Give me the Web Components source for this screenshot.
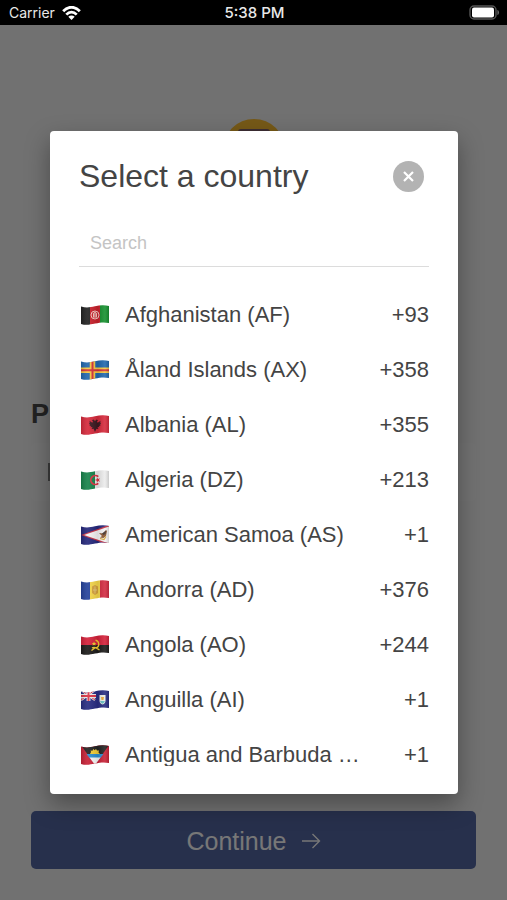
<!DOCTYPE html>
<html lang="en">
<head>
<meta charset="utf-8">
<meta name="viewport" content="width=device-width, initial-scale=1">
<title>Select a country</title>
<style>
  html, body {
    height: 100%;
    margin: 0;
  }
  body {
    font-family: "Liberation Sans", Arial, sans-serif;
    color: #444;
    overflow: hidden;
  }
</style>
</head>
<body>
<app-shell>
  <status-bar slot="status" carrier="Carrier" time="5:38 PM"></status-bar>
  <phone-screen label="P" action="Continue"></phone-screen>
  <picker-dialog slot="dialog" heading="Select a country">
    <country-row code="AF" name="Afghanistan" dial="+93"></country-row>
    <country-row code="AX" name="Åland Islands" dial="+358"></country-row>
    <country-row code="AL" name="Albania" dial="+355"></country-row>
    <country-row code="DZ" name="Algeria" dial="+213"></country-row>
    <country-row code="AS" name="American Samoa" dial="+1"></country-row>
    <country-row code="AD" name="Andorra" dial="+376"></country-row>
    <country-row code="AO" name="Angola" dial="+244"></country-row>
    <country-row code="AI" name="Anguilla" dial="+1"></country-row>
    <country-row code="AG" name="Antigua and Barbuda" dial="+1"></country-row>
  </picker-dialog>
</app-shell>

<script>
// Attach an open root and fill it
function render(el, html) {
  el.attachShadow({ mode: "open" }).innerHTML = html;
}

class AppShell extends HTMLElement {
  constructor() {
    super();
    render(this, `
<style>
  :host {
    display: flex;
    flex-direction: column;
    height: 100vh;
  }
  main {
    flex: 1;
    min-height: 0;
    display: grid;
  }
  .screen, .overlay {
    grid-area: 1 / 1;
    min-width: 0;
    min-height: 0;
    display: grid;
  }
  .overlay {
    z-index: 1;
    box-sizing: border-box;
    padding: 106px 49px 106px 50px;
    background: rgba(0, 0, 0, 0.5);
  }
</style>
<slot name="status"></slot>
<main>
  <div class="screen"><slot></slot></div>
  <div class="overlay"><slot name="dialog"></slot></div>
</main>`);
  }
}
customElements.define("app-shell", AppShell);

class StatusBar extends HTMLElement {
  constructor() {
    super();
    render(this, `
<style>
  :host {
    display: grid;
    grid-template-columns: 1fr auto 1fr;
    align-items: center;
    height: 25px;
    padding: 0 7px 0 9px;
    background: #000;
    color: #e8e8e8;
    font: 14px/25px Inter, sans-serif;
  }
  .left {
    display: flex;
    align-items: center;
    gap: 7px;
  }
  .time {
    font-size: 15px;
    font-weight: 500;
  }
  .battery {
    justify-self: end;
  }
  svg {
    display: block;
  }
</style>
<div class="left">
  <span class="carrier"></span>
  <svg width="19" height="14" viewBox="0 0 19 14" fill="none" stroke="#fff" stroke-width="2.8" aria-hidden="true">
    <path d="M1.2 5.2C6-.1 13-.1 17.8 5.2"/>
    <path d="M4.3 8.600c3.1-3.2 7.3-3.2 10.4 0"/>
    <path d="M9.500 14 6.300 10.800c1.800-1.700 4.600-1.700 6.400 0z" fill="#fff" stroke="none"/>
  </svg>
</div>
<span class="time"></span>
<svg class="battery" width="31" height="15" viewBox="0 0 31 15" aria-hidden="true">
  <rect x="1" y="1" width="26" height="13" rx="4" fill="none" stroke="#555" stroke-width="1.4"/>
  <rect x="3" y="2.500" width="22" height="10" rx="2" fill="#fff"/>
  <path d="M28.4 5c2.2.6 2.2 4.400 0 5z" fill="#666"/>
</svg>`);
    this.shadowRoot.querySelector(".carrier").textContent = this.getAttribute("carrier");
    this.shadowRoot.querySelector(".time").textContent = this.getAttribute("time");
  }
}
customElements.define("status-bar", StatusBar);

class PhoneScreen extends HTMLElement {
  constructor() {
    super();
    render(this, `
<style>
  :host {
    display: flex;
    flex-direction: column;
    box-sizing: border-box;
    padding: 94px 31px 31px;
    background: #e2e2e2;
  }
  .logo {
    align-self: center;
    margin-bottom: 217px;
  }
  .label {
    font-size: 27px;
    line-height: 32px;
    font-weight: 700;
    color: #444;
  }
  .field {
    display: flex;
    align-items: center;
    height: 58px;
    margin-top: 13px;
    padding-left: 17px;
    border-radius: 5px;
    background: #e5e5e5;
  }
  .field i {
    width: 28px;
    height: 18px;
    background: #777;
  }
  button {
    display: flex;
    justify-content: center;
    align-items: center;
    gap: 15px;
    height: 58px;
    margin-top: auto;
    padding: 2px 0 0;
    border: 0;
    border-radius: 5px;
    background: #4e6098;
    color: #eee;
    font: 25px/30px "Liberation Sans", Arial, sans-serif;
  }
</style>
<svg class="logo" width="62" height="62" viewBox="0 0 62 62" aria-hidden="true">
  <circle cx="31" cy="31" r="31" fill="#ecb22e"/>
  <rect x="15" y="10" width="32" height="42" rx="3" fill="#7a5c66"/>
</svg>
<span class="label"></span>
<div class="field"><i></i></div>
<button type="button">
  <span></span>
  <svg width="19" height="16" viewBox="0 0 19 16" fill="none" stroke="currentColor" stroke-width="1.4" aria-hidden="true">
    <path d="M0 8h17.500M10.500 1l7 7-7 7"/>
  </svg>
</button>`);
    this.shadowRoot.querySelector(".label").textContent = this.getAttribute("label");
    this.shadowRoot.querySelector("button span").textContent = this.getAttribute("action");
  }
}
customElements.define("phone-screen", PhoneScreen);

class PickerDialog extends HTMLElement {
  constructor() {
    super();
    render(this, `
<style>
  :host {
    display: flex;
    flex-direction: column;
    box-sizing: border-box;
    min-width: 0;
    min-height: 0;
    padding: 28px 29px;
    border-radius: 4px;
    background: #fff;
    box-shadow: 0 10px 24px rgba(0, 0, 0, 0.35);
  }
  header {
    display: flex;
    justify-content: space-between;
    align-items: center;
    padding-right: 5px;
  }
  h1 {
    margin: 0;
    font-size: 32px;
    line-height: 34px;
    font-weight: 400;
  }
  .close {
    display: grid;
    place-items: center;
    width: 31px;
    height: 31px;
    padding: 0;
    border: 0;
    border-radius: 50%;
    background: #b3b3b3;
  }
  input {
    box-sizing: border-box;
    width: 100%;
    height: 46px;
    margin: 28px 0 21px;
    padding: 0 11px;
    border: 0;
    border-bottom: 1px solid #dcdcdc;
    border-radius: 0;
    background: none;
    outline: none;
    color: inherit;
    font: 18px/22px "Liberation Sans", Arial, sans-serif;
  }
  input::placeholder {
    color: #c4c4c4;
    opacity: 1;
  }
  .list {
    flex: 1;
    min-height: 0;
    overflow-y: auto;
    scrollbar-width: none;
  }
</style>
<header>
  <h1></h1>
  <button class="close" type="button" aria-label="Close">
    <svg width="11" height="11" viewBox="0 0 11 11" stroke="#fff" stroke-width="2.200" aria-hidden="true">
      <path d="M1 1l9 9M10 1l-9 9"/>
    </svg>
  </button>
</header>
<input type="search" placeholder="Search" aria-label="Search">
<div class="list"><slot></slot></div>`);
    this.shadowRoot.querySelector("h1").textContent = this.getAttribute("heading");
  }
}
customElements.define("picker-dialog", PickerDialog);

// Flag artwork on a 28x20 field
const flags = {
  AF: `<path fill="#222" d="M0 0h9v20H0z"/><path fill="#c8202b" d="M9 0h10v20H9z"/><path fill="#16912f" d="M19 0h9v20h-9z"/>
    <circle cx="14" cy="10" r="4" fill="none" stroke="#f3c4bd" stroke-width="1"/><path fill="#f3c4bd" d="M12 8.500l2-2 2 2v4h-4z"/><path stroke="#c8202b" stroke-width=".8" d="M14 8v4"/>`,
  AX: `<path fill="#2268ae" d="M0 0h28v20H0z"/><path stroke="#f6c842" stroke-width="5.500" d="M11.500 0v20M0 10.300h28"/><path stroke="#d5313b" stroke-width="2" d="M11.500 0v20M0 10.300h28"/>`,
  AL: `<path fill="#d62a3c" d="M0 0h28v20H0z"/><path fill="#3c1820" d="M14 6l-1.500-1.600-1.500.8 1 1.200-.7 1.300-2.800-2 .3 2-.9.2 1 1.600-.6.700 1.700 1-.5 1 2-.3-.9 2.200 2-.4L14 17l1.400-3.300 2 .4-.9-2.200 2 .3-.5-1 1.700-1-.6-.7 1-1.600-.9-.2.3-2-2.800 2-.7-1.300 1-1.200-1.500-.8z"/>`,
  DZ: `<path fill="#17834b" d="M0 0h14v20H0z"/><path fill="#ececec" d="M14 0h14v20H14z"/><path d="M17.300 6.600a4.500 4.500 0 1 0 0 6.800" fill="none" stroke="#dc3241" stroke-width="1.700"/><path fill="#dc3241" d="M13.800 10l2-.7.1-2.100 1.200 1.700 2-.6L17.900 10l1.200 1.700-2-.6-1.200 1.700-.1-2.100z"/>`,
  AS: `<path fill="#25287c" d="M0 0h28v20H0z"/><path fill="#c83243" d="M0 10 28 0v20z"/><path fill="#f4f2f3" d="M3 10 28 1.500v17z"/><path fill="#8b5630" d="M18 8l4 .5 3-3.500 1 1-1 5-2.500 2-3.500-.5 2-1.500z"/><path d="M19 13.500l4 1 2-3" fill="none" stroke="#d8a637" stroke-width="1.200"/><path fill="#402f29" d="M21 8.500l4-3-.5 3.500-2 1z"/>`,
  AD: `<path fill="#25439c" d="M0 0h9v20H0z"/><path fill="#f5d64a" d="M9 0h10v20H9z"/><path fill="#d32b42" d="M19 0h9v20h-9z"/><path fill="#d5a13b" d="M11 6.500l3-1.500 3 1.500v6.500l-3 2-3-2z"/><path stroke="#e6c579" d="M14 6.500v7M12 10h4"/>`,
  AO: `<path fill="#d4213a" d="M0 0h28v10H0z"/><path fill="#1c1b1a" d="M0 10h28v10H0z"/><path d="M14.500 5.200c4 1 4.500 6.500.5 8M11 13c3-2 4 0 7.500 2M10.500 15.500l4-3" fill="none" stroke="#f2c92e" stroke-width="1.300"/><path fill="#f2c92e" d="M13 6.500l.7 1.500 1.600.1-1.200 1 .4 1.600-1.500-.9-1.400.9.400-1.600-1.200-1 1.600-.1z"/>`,
  AI: `<path fill="#282c82" d="M0 0h28v20H0z"/><path stroke="#eee" stroke-width="2.200" d="M0 0l14 10M14 0L0 10"/><path stroke="#dc3546" stroke-width="1" d="M0 0l14 10M14 0L0 10"/><path stroke="#eee" stroke-width="3.800" d="M7.500 0v11M0 6h15"/><path stroke="#dc3546" stroke-width="2" d="M7.500 0v11M0 6h15"/>
    <path fill="#ecece2" d="M18.500 5h6v5.500q0 3-3 4-3-1-3-4z"/><path fill="#e7a63a" d="M20 7h3l-.5 3h-2z"/><path fill="#65bfc5" d="M19 11h5l-1 2-1.500.800L20 13z"/>`,
  AG: `<path fill="#c82137" d="M0 0h28v20H0z"/><path fill="#222" d="M0 0h28L21 10H7z"/><path fill="#f5ce37" d="M9 9l1-2-.5-1.500 2 .3.700-1.700 1.500 1.200L15 4l1 1.600 2-.2-.5 2L19 9z"/><path fill="#2b8dd1" d="M5.500 9h17L19 13.500H9z"/><path fill="#f7f7f7" d="M8.500 12.500h11L14 20z"/>`
};

class CountryFlag extends HTMLElement {
  constructor() {
    super();
    render(this, `
<style>
  :host {
    display: block;
  }
  svg {
    display: block;
  }
</style>
<svg width="28" height="20" viewBox="0 0 28 20" aria-hidden="true">
  <defs>
    <clipPath id="wave"><path d="M0 1.500C5 3 9 2.400 14 1.300S23 0 28 1v17c-5-1-9-.5-14 .6S5 20.500 0 19z"/></clipPath>
    <linearGradient id="shade">
      <stop offset="0" stop-opacity=".15"/>
      <stop offset=".25" stop-color="#fff" stop-opacity=".08"/>
      <stop offset=".6" stop-opacity=".1"/>
      <stop offset=".85" stop-color="#fff" stop-opacity=".1"/>
      <stop offset="1" stop-opacity=".15"/>
    </linearGradient>
  </defs>
  <g clip-path="url(#wave)">
    ${flags[this.getAttribute("code")]}
    <path fill="url(#shade)" d="M0 0h28v20H0z"/>
  </g>
</svg>`);
  }
}
customElements.define("country-flag", CountryFlag);

class CountryRow extends HTMLElement {
  constructor() {
    super();
    const code = this.getAttribute("code");
    render(this, `
<style>
  :host {
    display: block;
  }
  button {
    display: flex;
    align-items: center;
    width: 100%;
    height: 55px;
    padding: 0 0 2px 2px;
    border: 0;
    background: none;
    color: inherit;
    font: 22px/28px "Liberation Sans", Arial, sans-serif;
    text-align: left;
  }
  .name {
    flex: 1;
    min-width: 0;
    margin: 0 14px 0 16px;
    overflow: hidden;
    text-overflow: ellipsis;
    white-space: nowrap;
  }
  .dial {
    min-width: 51px;
    text-align: right;
  }
</style>
<button type="button">
  <country-flag code="${code}"></country-flag>
  <span class="name">${this.getAttribute("name")} (${code})</span>
  <span class="dial">${this.getAttribute("dial")}</span>
</button>`);
  }
}
customElements.define("country-row", CountryRow);
</script>
</body>
</html>
